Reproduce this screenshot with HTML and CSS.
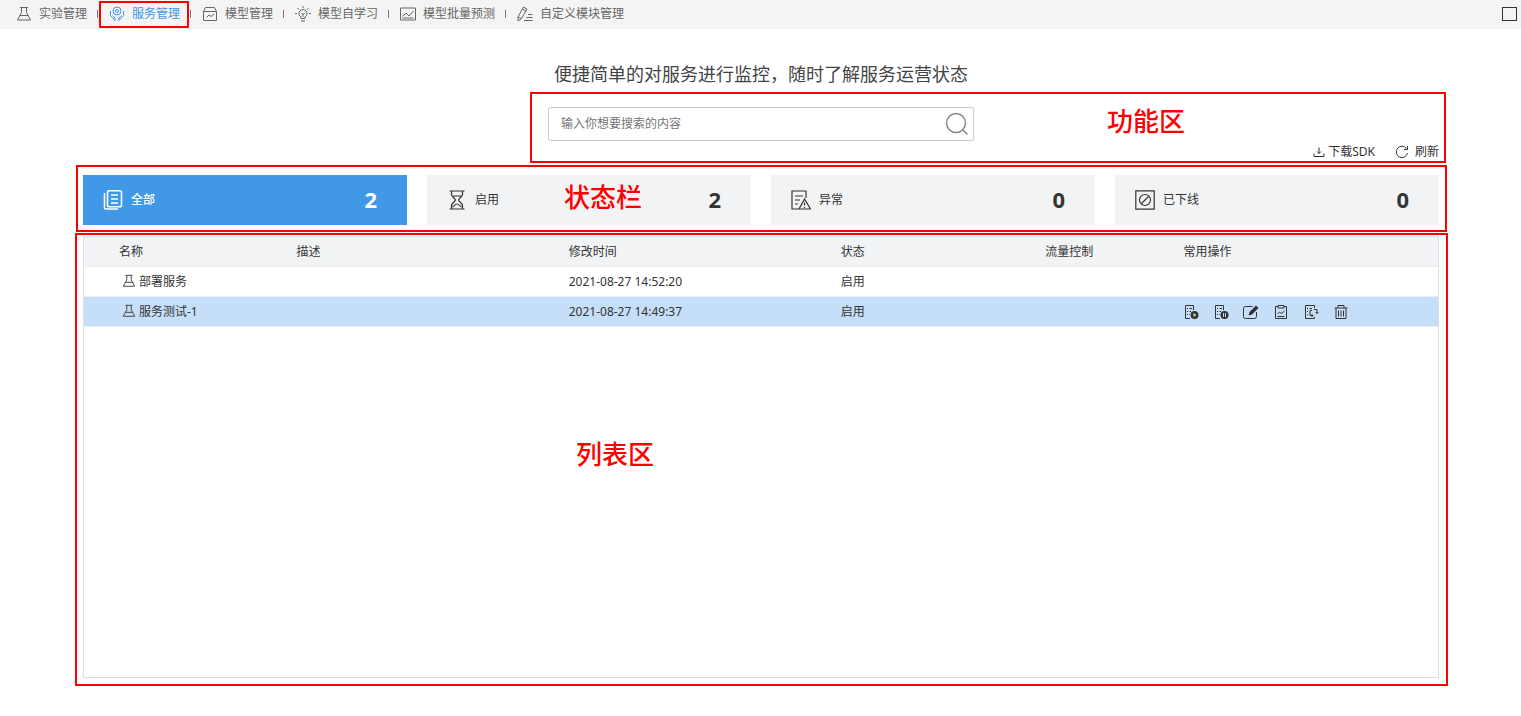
FILE: index.html
```html
<!DOCTYPE html>
<html lang="zh-CN">
<head>
  <meta charset="UTF-8">
  <meta name="viewport" content="width=device-width, initial-scale=1.0">
  <title>服务管理</title>
  <link rel="stylesheet" href="styles.css">
</head>
<body>
  <!-- shared icons -->
  <svg class="sprite" aria-hidden="true">
    <symbol id="flask" viewBox="0 0 16 16">
      <path d="M4 1.500h8M5.500 1.500v5L1.500 14h13l-4-7.500v-5M4 9.500h8"/>
    </symbol>
    <symbol id="doc" viewBox="0 0 16 16">
      <path d="M7 14.500H2.500v-13h8V6M4 4.500h1M6.500 4.500H9M4 7.500h1M6.500 7.500H8M4 10.500h1M6.500 10.500h.5"/>
    </symbol>
  </svg>

  <header class="topbar">
    <nav class="tabs">
      <a class="tab" href="#">
        <svg class="icon"><use href="#flask"/></svg>实验管理
      </a>
      <a class="tab active" href="#">
        <svg class="icon" viewBox="0 0 16 16"><circle cx="8" cy="5" r="4"/><circle cx="8" cy="5" r="1.500"/><path d="M1.500 5v4.500L6 14.500V12L3.500 9.500M14.500 5v4.500L10 14.500V12l2.500-2.500"/></svg>服务管理
      </a>
      <a class="tab" href="#">
        <svg class="icon" viewBox="0 0 16 16"><path d="M1.500 5.500v9h13v-9M1.500 5.500l2-4h9l2 4zM4.500 11.500L7 9l2 1.500L12 8"/></svg>模型管理
      </a>
      <a class="tab" href="#">
        <svg class="icon" viewBox="0 0 16 16"><path d="M6 12.500v-1.500a4 4 0 1 1 4 0v1.500zM6 15h4M8 11V8M6.500 7L8 8.500 9.500 7M8 0v2M2.500 2l1.500 1.500M13.500 2L12 3.500M0 7.500h2M14 7.500h2"/></svg>模型自学习
      </a>
      <a class="tab" href="#">
        <svg class="icon" viewBox="0 0 16 16"><path d="M.5 2h15v12H.5zM2.500 10.500L6 7l3 3 4.500-5M2.500 12h11"/></svg>模型批量预测
      </a>
      <a class="tab" href="#">
        <svg class="icon" viewBox="0 0 16 16"><path d="M1 15v-4L6.500 1 10 3 4.500 12.500zM5.500 3L9 5M1 11l3.500 1.500M11 8.500h4.500M9.500 11.500h6M7 14.500h8.500"/></svg>自定义模块管理
      </a>
    </nav>
    <button class="maximize" aria-label="最大化"></button>
  </header>

  <main class="page">
    <h1 class="slogan">便捷简单的对服务进行监控，随时了解服务运营状态</h1>

    <section class="tools">
      <form class="search" onsubmit="return false">
        <input type="text" aria-label="搜索" placeholder="输入你想要搜索的内容">
        <button class="search-btn" aria-label="搜索">
          <svg viewBox="0 0 24 24"><circle cx="11" cy="11" r="9.500"/><path d="M18 18l4.500 4.500"/></svg>
        </button>
      </form>
      <div class="links">
        <button class="link download">
          <svg viewBox="0 0 12 12"><path d="M6 1.500v6M4 5.500l2 2 2-2M1 7.500v3h10v-3"/></svg>下载SDK
        </button>
        <button class="link refresh">
          <svg viewBox="0 0 14 14"><path d="M12.500 8A5.700 5.700 0 1 1 11.500 3.500M12.500 1v3.500H9"/></svg>刷新
        </button>
      </div>
      <div class="mark mark-tools"></div>
      <span class="mark-text text-tools">功能区</span>
    </section>

    <section class="status">
      <button class="card current">
        <svg viewBox="0 0 20 20"><path d="M6 .8h11a1.500 1.500 0 0 1 1.500 1.500v13a1.500 1.500 0 0 1-1.500 1.500H6a1.500 1.500 0 0 1-1.500-1.500v-13A1.500 1.500 0 0 1 6 .8zM1.500 3v14.500a1.500 1.500 0 0 0 1.500 1.500h12M8 5h7M8 9h7M8 13h7"/></svg>
        <span>全部</span><b>2</b>
      </button>
      <button class="card">
        <svg viewBox="0 0 20 20"><path d="M2.500 1h15M2.500 19h15M4.500 1v3.500C4.500 7 8.500 8.500 8.500 10S4.500 13 4.500 15.500V19M15.500 1v3.500c0 2.500-4 4-4 5.500s4 3 4 5.500V19M6 6h8M5.500 17c2-1.500 3-3 4.500-3s2.500 1.500 4.500 3"/></svg>
        <span>启用</span><b>2</b>
      </button>
      <button class="card">
        <svg viewBox="0 0 20 20"><path d="M8 19H1V1h14v7M4 6h8M4 10h5M4 14h3M13.500 9L8 19h11.500zM13.500 12.500v3M13.500 17v1"/></svg>
        <span>异常</span><b>0</b>
      </button>
      <button class="card">
        <svg viewBox="0 0 20 20"><path d="M.8.800h18.400v18.400H.8zM6.500 13.500l7-7"/><circle cx="10" cy="10" r="5.500"/></svg>
        <span>已下线</span><b>0</b>
      </button>
      <div class="mark mark-status"></div>
      <span class="mark-text text-status">状态栏</span>
    </section>

    <section class="list">
      <table>
        <thead>
          <tr>
            <th class="col-name">名称</th>
            <th class="col-desc">描述</th>
            <th class="col-time">修改时间</th>
            <th class="col-state">状态</th>
            <th class="col-flow">流量控制</th>
            <th>常用操作</th>
          </tr>
        </thead>
        <tbody>
          <tr>
            <td class="name"><svg class="row-icon"><use href="#flask"/></svg>部署服务</td>
            <td></td>
            <td>2021-08-27 14:52:20</td>
            <td>启用</td>
            <td></td>
            <td></td>
          </tr>
          <tr class="selected">
            <td class="name"><svg class="row-icon"><use href="#flask"/></svg>服务测试-1</td>
            <td></td>
            <td>2021-08-27 14:49:37</td>
            <td>启用</td>
            <td></td>
            <td>
              <div class="ops">
                <button aria-label="启动"><svg viewBox="0 0 16 16"><use href="#doc"/><circle class="solid" cx="11.500" cy="11" r="4"/><path class="cut" d="M10.500 9l3 2-3 2z"/></svg></button>
                <button aria-label="暂停"><svg viewBox="0 0 16 16"><use href="#doc"/><circle class="solid" cx="11.500" cy="11" r="4"/><path class="cut-line" d="M10.500 9v4M12.500 9v4"/></svg></button>
                <button aria-label="编辑"><svg viewBox="0 0 16 16"><path d="M9.500 2.500H2.500a2 2 0 0 0-2 2v8a2 2 0 0 0 2 2h9a2 2 0 0 0 2-2V8"/><path class="solid" d="M5.500 11.500l1-3.500 6.500-6.500 2.500 2.500L9 10.500z"/></svg></button>
                <button aria-label="监控"><svg viewBox="0 0 16 16"><path d="M5 2.500H2.500v12h11v-12H11M5 1.500h6v2.500H5zM4.500 10l2-2 2 1.500 3-2.500M4.500 12.500h7"/></svg></button>
                <button aria-label="导出"><svg viewBox="0 0 16 16"><path d="M11.500 13v1.500h-9v-13h9V4M4 4.500h1M6.500 4.500H9M4 7.500h1M4 11h1M9 6.500H7v5h3M8.500 10l1.500 1.500L8.500 13M11 5.500h3v4M12.500 8L14 9.500 15.500 8"/></svg></button>
                <button aria-label="删除"><svg viewBox="0 0 16 16"><path d="M1.500 4h13M5 4V1.500h6V4M3 4v10.500h10V4M5.500 6.500v6M8 6.500v6M10.500 6.500v6"/></svg></button>
              </div>
            </td>
          </tr>
        </tbody>
      </table>
      <div class="mark mark-list"></div>
      <span class="mark-text text-list">列表区</span>
    </section>
  </main>
</body>
</html>
```

FILE: styles.css
```css
* {
  box-sizing: border-box;
}
body {
  margin: 0;
  min-height: 100vh;
  display: flex;
  flex-direction: column;
  font-family: "Noto Sans", "Noto Sans CJK SC", sans-serif;
  font-size: 12px;
  line-height: 20px;
  color: #333;
  background-color: #fff;
}
button, input {
  font: inherit;
  color: inherit;
  border: none;
  background: none;
  padding: 0;
}
button {
  cursor: pointer;
}
svg {
  fill: none;
  stroke: currentColor;
  stroke-width: 1;
  flex: none;
}
.sprite {
  position: absolute;
  width: 0;
  height: 0;
}

/* top bar */
.topbar {
  display: flex;
  justify-content: space-between;
  align-items: center;
  height: 29px;
  padding: 0 4px 1px 5px;
  background-color: #f4f4f4;
}
.tabs {
  display: flex;
}
.tab {
  position: relative;
  display: flex;
  align-items: center;
  gap: 7px;
  padding: 0 11px;
  color: #666;
  text-decoration: none;
  white-space: nowrap;
}
.tab::after {
  content: "";
  position: absolute;
  right: 0;
  top: 6px;
  width: 1px;
  height: 8px;
  background-color: #777;
}
.tab:last-child::after {
  display: none;
}
.icon {
  width: 16px;
  height: 16px;
}
.tab.active {
  color: #4098e7;
}
.tab.active::before {
  content: "";
  position: absolute;
  inset: -3px 2px -4px 1px;
  border: 2px solid #f00;
}
.maximize {
  width: 15px;
  height: 14px;
  border: 1px solid #333;
}

/* content */
.page {
  flex: 1;
  display: flex;
  flex-direction: column;
  padding: 30px 82px 38px 83px;
}
.slogan {
  margin: 0 0 18px;
  font-size: 18px;
  font-weight: 400;
  line-height: 30px;
  text-align: center;
  color: #444;
}
.tools {
  position: relative;
}
.search {
  position: relative;
  width: 426px;
  margin: 0 auto;
}
.search input {
  display: block;
  width: 100%;
  height: 34px;
  padding: 0 40px 2px 12px;
  border: 1px solid #c8c8c4;
  border-radius: 3px;
}
.search input::placeholder {
  color: #757575;
}
.search-btn {
  position: absolute;
  right: 5px;
  top: 5px;
  width: 24px;
  height: 24px;
  color: #888;
}
.search-btn svg {
  display: block;
  stroke-width: 1.5;
}
.links {
  display: flex;
  justify-content: flex-end;
  gap: 20px;
}
.link {
  display: flex;
  align-items: center;
  line-height: 22px;
}
.download svg {
  width: 12px;
  height: 12px;
  margin-right: 3px;
}
.refresh svg {
  width: 14px;
  height: 14px;
  margin-right: 6px;
}

/* status cards */
.status {
  position: relative;
  display: grid;
  grid-template-columns: repeat(4, 1fr);
  gap: 20px;
  margin-top: 12px;
}
.card {
  display: flex;
  align-items: center;
  height: 50px;
  padding: 0 30px 0 20px;
  background-color: #f2f3f5;
}
.card svg {
  width: 20px;
  height: 20px;
  margin-right: 8px;
  stroke-width: 1.2;
}
.card b {
  margin-left: auto;
  padding-bottom: 2px;
  font-size: 22px;
}
.card.current {
  background-color: #4098e7;
  color: #fff;
}
.current svg {
  stroke-width: 1.6;
}
.current span {
  font-weight: 500;
}

/* service list */
.list {
  position: relative;
  flex: 1;
  margin-top: 11px;
  border: 1px solid #dcdcea;
}
table {
  width: 100%;
  table-layout: fixed;
  border-spacing: 0;
}
th, td {
  height: 30px;
  padding: 0;
  border-bottom: 1px solid #ebeef2;
  text-align: left;
  font-weight: 400;
}
th {
  background-color: #f2f3f5;
}
.col-name {
  width: 15.7%;
  padding-left: 35px;
}
.col-desc, .col-time {
  width: 20.1%;
}
.col-state {
  width: 15.1%;
}
.col-flow {
  width: 10.2%;
}
.name {
  padding-left: 38px;
}
.row-icon {
  width: 14px;
  height: 14px;
  margin-right: 3px;
  vertical-align: -2px;
}
.selected {
  background-color: #c5dff8;
}
.ops {
  display: flex;
  gap: 14px;
  padding-top: 1px;
}
.ops button, .ops svg {
  display: block;
  width: 16px;
  height: 16px;
}
.solid {
  fill: currentColor;
  stroke: none;
}
.cut {
  fill: #c5dff8;
  stroke: none;
}
.cut-line {
  stroke: #c5dff8;
}

/* red guide frames and captions */
.mark {
  position: absolute;
  border: 2px solid #f00;
  pointer-events: none;
}
.mark-tools {
  inset: -15px -7px 0 calc(50% - 231px);
}
.mark-status {
  inset: -10px -8px -7px -7px;
}
.mark-list {
  inset: -4px -10px -9px -9px;
}
.mark-text {
  position: absolute;
  font-size: 26px;
  font-weight: 500;
  line-height: 40px;
  color: #f00;
  white-space: nowrap;
}
.text-tools {
  right: 254px;
  top: -6px;
}
.text-status {
  left: 481px;
  top: 2px;
}
.text-list {
  left: 492px;
  top: 197px;
}
```
